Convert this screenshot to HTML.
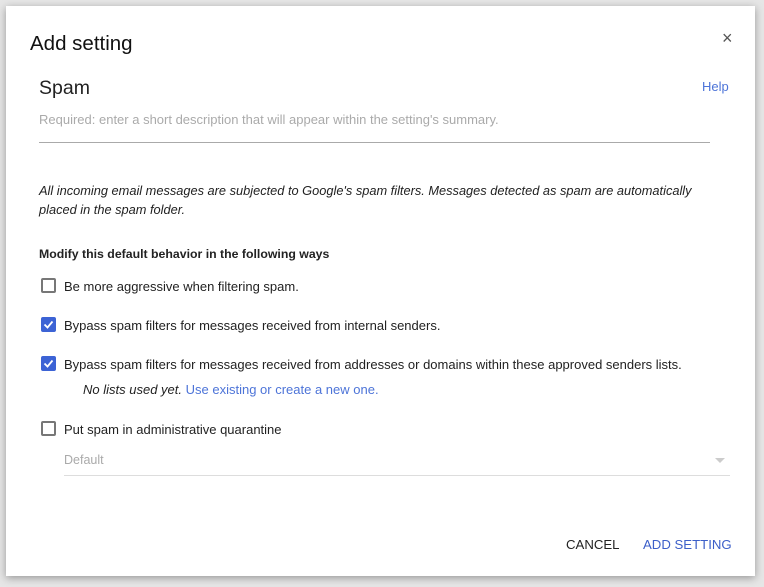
<!DOCTYPE html>
<html><head><style>
*{margin:0;padding:0;box-sizing:border-box}
body{width:764px;height:587px;background:#e6e6e6;font-family:"Liberation Sans",Arial,sans-serif;position:relative;overflow:hidden}
.dlg{position:absolute;left:6px;top:6px;width:749px;height:570px;background:#fff;box-shadow:0 2px 8px rgba(0,0,0,.35)}
.a{position:absolute;white-space:nowrap}
.cb{position:absolute;left:35px;width:15px;height:15px;border:2px solid #777;border-radius:2px}
.cb.on{background:#3c63d5;border-color:#3c63d5}
.t{font-size:13px;color:#222;left:58px}
</style></head><body>
<div class="dlg">
<div class="a" style="left:24px;top:26px;font-size:20.5px;color:#111">Add setting</div>
<div class="a" style="left:716px;top:22px;font-size:18px;color:#555">×</div>
<div class="a" style="left:33px;top:71px;font-size:19.5px;color:#222">Spam</div>
<div class="a" style="left:696px;top:73px;font-size:13px;color:#4d74d8">Help</div>
<div class="a" style="left:33px;top:106px;font-size:13px;color:#aaa">Required: enter a short description that will appear within the setting's summary.</div>
<div class="a" style="left:33px;top:136px;width:671px;height:1px;background:#aaa"></div>
<div class="a" style="left:33px;top:175px;font-size:12.8px;font-style:italic;color:#222;line-height:19px;white-space:normal;width:680px">All incoming email messages are subjected to Google's spam filters. Messages detected as spam are automatically placed in the spam folder.</div>
<div class="a" style="left:33px;top:241px;font-size:12.3px;font-weight:bold;color:#222">Modify this default behavior in the following ways</div>
<div class="cb" style="top:272px"></div>
<div class="a t" style="top:273px">Be more aggressive when filtering spam.</div>
<div class="cb on" style="top:311px"><svg width="11" height="11" viewBox="0 0 11 11" style="position:absolute;left:0;top:0"><path d="M1.5 5.5l3 3 5-6" stroke="#fff" stroke-width="1.8" fill="none"/></svg></div>
<div class="a t" style="top:312px">Bypass spam filters for messages received from internal senders.</div>
<div class="cb on" style="top:350px"><svg width="11" height="11" viewBox="0 0 11 11" style="position:absolute;left:0;top:0"><path d="M1.5 5.5l3 3 5-6" stroke="#fff" stroke-width="1.8" fill="none"/></svg></div>
<div class="a t" style="top:351px">Bypass spam filters for messages received from addresses or domains within these approved senders lists.</div>
<div class="a" style="left:77px;top:376px;font-size:13px;color:#222"><i>No lists used yet.</i> <span style="color:#4d74d8">Use existing or create a new one.</span></div>
<div class="cb" style="top:415px"></div>
<div class="a t" style="top:416px">Put spam in administrative quarantine</div>
<div class="a" style="left:58px;top:447px;font-size:12.5px;color:#aaa">Default</div>
<div class="a" style="left:709px;top:452px;width:0;height:0;border-left:5px solid transparent;border-right:5px solid transparent;border-top:5px solid #ccc"></div>
<div class="a" style="left:58px;top:469px;width:666px;height:1px;background:#ddd"></div>
<div class="a" style="left:560px;top:531px;font-size:13.2px;color:#222">CANCEL</div>
<div class="a" style="left:637px;top:531px;font-size:13.2px;color:#3c5fc9">ADD SETTING</div>
</div>
</body></html>
